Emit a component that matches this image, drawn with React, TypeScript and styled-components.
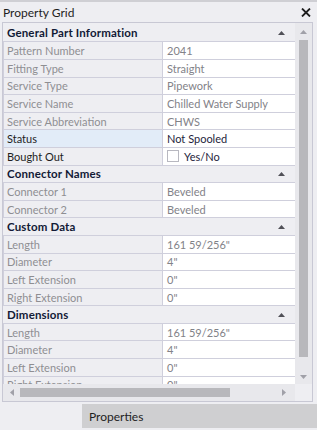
import React from 'react';
import styled, { createGlobalStyle } from 'styled-components';

interface Property {
  label: string;
  value: string;
  editable?: boolean;
  selected?: boolean;
  checkbox?: boolean;
}

interface Category {
  title: string;
  items: Property[];
}

const categories: Category[] = [
  {
    title: 'General Part Information',
    items: [
      { label: 'Pattern Number', value: '2041' },
      { label: 'Fitting Type', value: 'Straight' },
      { label: 'Service Type', value: 'Pipework' },
      { label: 'Service Name', value: 'Chilled Water Supply' },
      { label: 'Service Abbreviation', value: 'CHWS' },
      { label: 'Status', value: 'Not Spooled', editable: true, selected: true },
      { label: 'Bought Out', value: 'Yes/No', editable: true, checkbox: true },
    ],
  },
  {
    title: 'Connector Names',
    items: [
      { label: 'Connector 1', value: 'Beveled' },
      { label: 'Connector 2', value: 'Beveled' },
    ],
  },
  {
    title: 'Custom Data',
    items: [
      { label: 'Length', value: '161 59/256"' },
      { label: 'Diameter', value: '4"' },
      { label: 'Left Extension', value: '0"' },
      { label: 'Right Extension', value: '0"' },
    ],
  },
  {
    title: 'Dimensions',
    items: [
      { label: 'Length', value: '161 59/256"' },
      { label: 'Diameter', value: '4"' },
      { label: 'Left Extension', value: '0"' },
      { label: 'Right Extension', value: '0"' },
    ],
  },
];

const GlobalStyle = createGlobalStyle`
  html, body {
    margin: 0;
    padding: 0;
  }
  body {
    background: #eeeef2;
    font-family: Lato, "Noto Sans", sans-serif;
    font-size: 11px;
  }
`;

const Triangle = ({ dir, color, size = 7 }: { dir: 'up' | 'down' | 'left' | 'right'; color: string; size?: number }) => {
  const h = Math.ceil(size / 2);
  const points = {
    up: `0,${h} ${size},${h} ${size / 2},0`,
    down: `0,0 ${size},0 ${size / 2},${h}`,
    left: `${h},0 ${h},${size} 0,${size / 2}`,
    right: `0,0 0,${size} ${h},${size / 2}`,
  }[dir];
  const vertical = dir === 'up' || dir === 'down';
  return (
    <svg width={vertical ? size : h} height={vertical ? h : size} style={{ display: 'block' }}>
      <polygon points={points} fill={color} />
    </svg>
  );
};

const App: React.FC = () => {
  return (
    <Window>
      <GlobalStyle />
      <TitleBar>
        <span>Property Grid</span>
        <svg width="10" height="9" viewBox="0 0 10 9">
          <path d="M1 0.5 L9 8.5 M9 0.5 L1 8.5" stroke="#1e1e1e" strokeWidth="1.8" />
        </svg>
      </TitleBar>
      <Frame>
        <Content>
          {categories.map((cat) => (
            <React.Fragment key={cat.title}>
              <HeaderRow>
                <span>{cat.title}</span>
                <Triangle dir="up" color="#505058" size={7} />
              </HeaderRow>
              {cat.items.map((item) => (
                <Row key={cat.title + item.label}>
                  <Label editable={item.editable} selected={item.selected}>{item.label}</Label>
                  <Value editable={item.editable}>
                    {item.checkbox && <CheckBox />}
                    {item.value}
                  </Value>
                </Row>
              ))}
            </React.Fragment>
          ))}
        </Content>
        <VScroll>
          <Triangle dir="up" color="#a0a0a8" size={7} />
          <VThumb />
          <Triangle dir="down" color="#a0a0a8" size={7} />
        </VScroll>
        <HScroll>
          <Triangle dir="left" color="#a0a0a8" size={7} />
          <HThumb />
          <Triangle dir="right" color="#a0a0a8" size={7} />
        </HScroll>
        <Corner />
      </Frame>
      <BottomBar>
        <Tab>Properties</Tab>
      </BottomBar>
    </Window>
  );
};

export default App;

const Window = styled.div`
  width: 317px;
  height: 430px;
  display: flex;
  flex-direction: column;
  overflow: hidden;
`;

const TitleBar = styled.div`
  height: 20px;
  border-top: 2px solid #cfcfd4;
  display: flex;
  align-items: center;
  justify-content: space-between;
  padding: 0 6px 0 3px;
  font-size: 12px;
  color: #1e1e1e;
`;

const Frame = styled.div`
  height: 380px;
  box-sizing: border-box;
  margin: 0 4px 0 2px;
  border: 1px solid #c8c8d4;
  display: grid;
  grid-template-columns: 1fr 17px;
  grid-template-rows: 1fr 17px;
  background: #ffffff;
`;

const Content = styled.div`
  overflow: hidden;
  background: #eeeef2;
  padding-top: 1px;
`;

const HeaderRow = styled.div`
  height: 17.6px;
  box-sizing: border-box;
  display: flex;
  align-items: center;
  justify-content: space-between;
  padding: 0 10px 0 4px;
  border-bottom: 1px solid #cfcfdc;
  font-weight: bold;
  font-size: 11.5px;
  letter-spacing: 0.15px;
  color: #121a36;
  &:first-child {
    height: 18.4px;
  }
`;

const Row = styled.div`
  height: 17.6px;
  box-sizing: border-box;
  display: grid;
  grid-template-columns: 160px 1fr;
  border-bottom: 1px solid #cfcfdc;
`;

const Label = styled.div<{ editable?: boolean; selected?: boolean }>`
  display: flex;
  align-items: center;
  padding-left: 3px;
  border-left: 1px solid #cfcfdc;
  border-right: 1px solid #cfcfdc;
  background: ${({ selected }) => (selected ? '#e2ecf8' : '#eeeef2')};
  color: ${({ editable }) => (editable ? '#1e1e1e' : '#8e8e92')};
  white-space: nowrap;
  overflow: hidden;
`;

const Value = styled.div<{ editable?: boolean }>`
  display: flex;
  align-items: center;
  gap: 5px;
  padding-left: 4px;
  background: #ffffff;
  color: ${({ editable }) => (editable ? '#1e1e3c' : '#828288')};
  white-space: nowrap;
  overflow: hidden;
`;

const CheckBox = styled.span`
  width: 12px;
  height: 12px;
  box-sizing: border-box;
  border: 1px solid #b8b8c0;
  background: #ffffff;
`;

const VScroll = styled.div`
  background: #e8e8ec;
  display: flex;
  flex-direction: column;
  align-items: center;
  padding: 7px 0 5px;
  gap: 6px;
`;

const VThumb = styled.div`
  width: 9px;
  flex: 1;
  background: #b8b8bc;
  margin-bottom: 12px;
`;

const HScroll = styled.div`
  background: #e8e8ec;
  display: flex;
  align-items: center;
  padding: 0 9px 0 7px;
  gap: 6px;
`;

const HThumb = styled.div`
  height: 9px;
  width: 210px;
  background: #b8b8bc;
  margin-right: auto;
`;

const Corner = styled.div`
  background: #eeeef2;
`;

const BottomBar = styled.div`
  flex: 1;
  display: flex;
  padding: 2px 0 2px 82px;
`;

const Tab = styled.div`
  flex: 1;
  display: flex;
  align-items: center;
  padding-left: 7px;
  background: #cfcfd1;
  color: #1e1e1e;
  font-size: 12px;
`;
